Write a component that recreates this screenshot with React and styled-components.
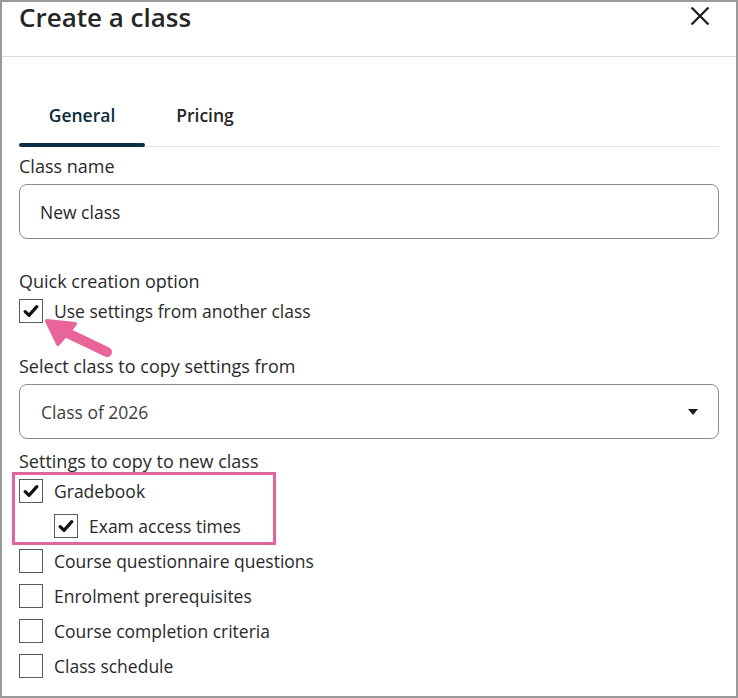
import React from "react";
import styled, { createGlobalStyle } from "styled-components";

const GlobalStyle = createGlobalStyle`
  html, body { margin: 0; padding: 0; background: #fff; }
  body { font-family: "Open Sans", "Noto Sans", sans-serif; color: #262626; }
  * { box-sizing: border-box; }
`;

const Frame = styled.div`
  width: 738px;
  height: 698px;
  border: 2px solid #9a9a9a;
  background: #fff;
  overflow: hidden;
  display: flex;
  flex-direction: column;
`;

const Header = styled.header`
  height: 55px;
  flex: none;
  border-bottom: 1px solid #dcdcdc;
  display: flex;
  align-items: flex-start;
  justify-content: space-between;
  padding: 0 25px 0 17px;
`;

const Title = styled.h1`
  margin: 0;
  font-size: 26px;
  line-height: 30px;
  font-weight: 600;
  color: #262626;
`;

const CloseButton = styled.button`
  border: 0;
  background: none;
  padding: 0;
  margin-top: 3px;
  width: 22px;
  height: 22px;
  display: flex;
  align-items: center;
  justify-content: center;
  cursor: pointer;
`;

const Body = styled.div`
  padding: 31px 17px 0 17px;
  display: flex;
  flex-direction: column;
`;

const TabList = styled.div`
  display: flex;
  border-bottom: 1px solid #e2e2e2;
  height: 59px;
`;

const Tab = styled.div`
  width: ${(p) => p.$w}px;
  display: flex;
  justify-content: center;
  align-items: center;
  padding-bottom: 5px;
  font-size: 17.5px;
  font-weight: 600;
  color: ${(p) => (p.$active ? "#0e2c3c" : "#262626")};
  position: relative;
  &::after {
    content: "";
    display: ${(p) => (p.$active ? "block" : "none")};
    position: absolute;
    left: 0;
    right: 0;
    bottom: -1px;
    height: 4px;
    border-radius: 2px;
    background: #0d2f44;
  }
`;

const Label = styled.div`
  font-size: 18px;
  font-weight: 500;
  color: #2a2a2a;
  line-height: 24px;
  margin-top: ${(p) => p.$mt || 0}px;
`;

const Field = styled.div`
  margin-top: ${(p) => p.$mt || 0}px;
  height: 55px;
  flex: none;
  border: 1px solid #8a8a8a;
  border-radius: 8px;
  display: flex;
  align-items: center;
  justify-content: space-between;
  padding: 0 20px 0 ${(p) => p.$pl || 20}px;
  font-size: 17.5px;
  color: ${(p) => (p.$muted ? "#404040" : "#262626")};
`;

const Caret = styled.span`
  width: 0;
  height: 0;
  border-left: 5px solid transparent;
  border-right: 5px solid transparent;
  border-top: 6px solid #1a1a1a;
`;

const Row = styled.div`
  display: flex;
  align-items: center;
  height: 35px;
  flex: none;
  padding-left: ${(p) => p.$indent || 0}px;
  font-size: 17.5px;
  color: #2a2a2a;
  gap: 11px;
`;

const Box = styled.span`
  width: 24px;
  height: 24px;
  border: 1px solid #5a5a5a;
  flex: none;
  display: flex;
  align-items: center;
  justify-content: center;
  background: #fff;
`;

/* pink callout frame drawn over the grouped rows */
const Highlight = styled.div`
  position: relative;
  display: flex;
  flex-direction: column;
  &::before {
    content: "";
    position: absolute;
    left: -7px;
    top: -1px;
    width: 258px;
    bottom: -2px;
    border: 3px solid #e0669a;
    pointer-events: none;
  }
`;

const ArrowWrap = styled.div`
  position: relative;
  height: 0;
`;

const Pointer = styled.svg`
  position: absolute;
  left: 24px;
  top: -10px;
`;

const Check = () => (
  <svg width="16" height="14" viewBox="0 0 16 14">
    <path d="M2.2 7.6 L6 11.4 L13.8 2.6" fill="none" stroke="#111" strokeWidth="3.2" strokeLinecap="round" strokeLinejoin="round" />
  </svg>
);

const CheckRow = ({ checked, indent, children }) => (
  <Row $indent={indent}>
    <Box>{checked && <Check />}</Box>
    <span>{children}</span>
  </Row>
);

export default function App() {
  return (
    <>
      <GlobalStyle />
      <Frame>
        <Header>
          <Title>Create a class</Title>
          <CloseButton aria-label="Close">
            <svg width="20" height="20" viewBox="0 0 20 20">
              <path d="M1.5 1.5 L18.5 18.5 M18.5 1.5 L1.5 18.5" stroke="#1a1a1a" strokeWidth="2.2" />
            </svg>
          </CloseButton>
        </Header>
        <Body>
          <TabList>
            <Tab $w={126} $active>General</Tab>
            <Tab $w={120}>Pricing</Tab>
          </TabList>
          <Label $mt={7}>Class name</Label>
          <Field $mt={6} $pl={20}>New class</Field>
          <Label $mt={30}>Quick creation option</Label>
          <CheckRow checked>Use settings from another class</CheckRow>
          <ArrowWrap>
            <Pointer width="72" height="42" viewBox="0 0 72 42">
              <path d="M64 34 L16 11" stroke="#e8649a" strokeWidth="10" strokeLinecap="round" />
              <path d="M4 3 L32 6 L15 26 Z" fill="#e8649a" stroke="#e8649a" strokeWidth="4" strokeLinejoin="round" />
            </Pointer>
          </ArrowWrap>
          <Label $mt={26}>Select class to copy settings from</Label>
          <Field $mt={6} $pl={21} $muted>
            <span>Class of 2026</span>
            <Caret />
          </Field>
          <Label $mt={10}>Settings to copy to new class</Label>
          <Highlight>
            <CheckRow checked>Gradebook</CheckRow>
            <CheckRow checked indent={35}>Exam access times</CheckRow>
          </Highlight>
          <CheckRow>Course questionnaire questions</CheckRow>
          <CheckRow>Enrolment prerequisites</CheckRow>
          <CheckRow>Course completion criteria</CheckRow>
          <CheckRow>Class schedule</CheckRow>
        </Body>
      </Frame>
    </>
  );
}
